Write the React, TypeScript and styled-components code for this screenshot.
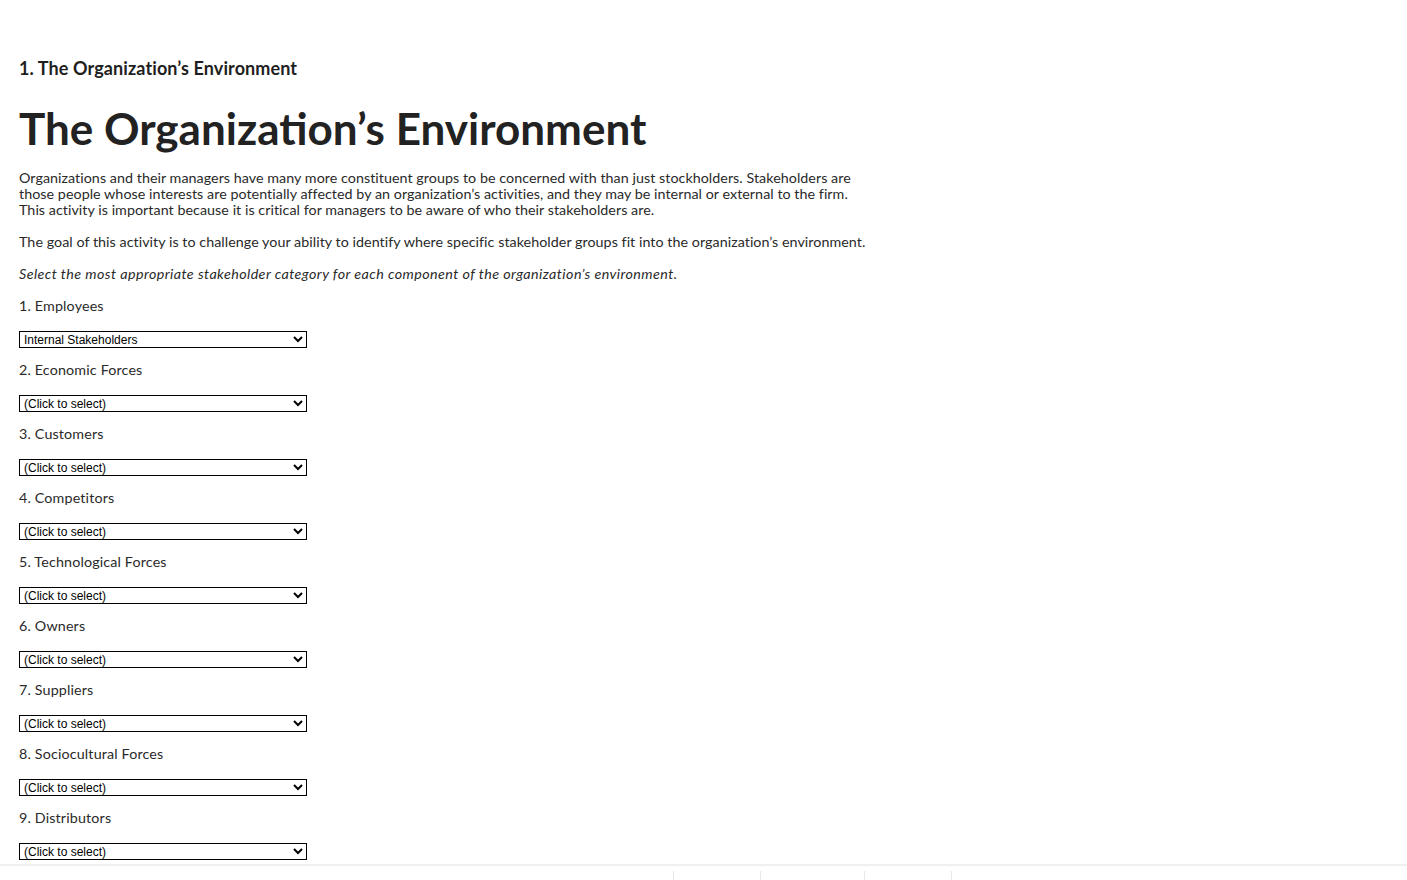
import React from "react";
import styled, { createGlobalStyle } from "styled-components";

const Global = createGlobalStyle`
  html, body { margin: 0; padding: 0; background: #fff; }
  body { font-family: Lato, "Open Sans", sans-serif; color: #222; }
`;

const Page = styled.main`
  padding: 55px 19px 40px 19px;
`;

const Crumb = styled.h2`
  margin: 0;
  font-size: 18px;
  letter-spacing: 0.1px;
  line-height: 26px;
  font-weight: 700;
  color: #1f1f1f;
`;

const Title = styled.h1`
  margin: 22px 0 17px 0;
  font-size: 44px;
  line-height: 50px;
  font-weight: 700;
  color: #222;
`;

const Para = styled.p<{ $italic?: boolean }>`
  margin: 0 0 16px 0;
  font-size: 14.3px;
  line-height: 16px;
  max-width: 856px;
  letter-spacing: ${(p) => (p.$italic ? "0.42px" : "0.04px")};
  font-style: ${(p) => (p.$italic ? "italic" : "normal")};
  color: #2a2a2a;
`;

const Item = styled.div`
  display: flex;
  flex-direction: column;
  align-items: flex-start;
`;

const Label = styled.label`
  font-size: 14.3px;
  letter-spacing: 0.15px;
  line-height: 16px;
  margin: 0 0 17px 0;
  color: #2a2a2a;
`;

const Select = styled.select`
  width: 288px;
  height: 17px;
  margin: 0 0 14px 0;
  border: 1px solid #000;
  border-radius: 0;
  padding: 0;
  font-family: Arial, "Liberation Sans", sans-serif;
  font-size: 12px;
  color: #000;
  background: #fff;
`;

const Footer = styled.footer`
  position: fixed;
  left: 0;
  right: 0;
  top: 864px;
  height: 50px;
  background: #fff;
  border-top: 2px solid #f0f0f0;
  display: flex;
  justify-content: flex-end;
  padding-right: 455px;
`;

const Tab = styled.div<{ $w: number }>`
  box-sizing: border-box;
  width: ${(p) => p.$w}px;
  margin-top: 5px;
  border-left: 1px solid #e8e8e8;
`;

const items = [
  "Employees",
  "Economic Forces",
  "Customers",
  "Competitors",
  "Technological Forces",
  "Owners",
  "Suppliers",
  "Sociocultural Forces",
  "Distributors",
];

export default function App() {
  return (
    <>
      <Global />
      <Page>
        <Crumb>1. The Organization’s Environment</Crumb>
        <Title>The Organization’s Environment</Title>
        <Para>
          Organizations and their managers have many more constituent groups to be concerned with than just
          stockholders. Stakeholders are those people whose interests are potentially affected by an
          organization’s activities, and they may be internal or external to the firm. This activity is important
          because it is critical for managers to be aware of who their stakeholders are.
        </Para>
        <Para>
          The goal of this activity is to challenge your ability to identify where specific stakeholder groups fit
          into the organization’s environment.
        </Para>
        <Para $italic>
          Select the most appropriate stakeholder category for each component of the organization’s environment.
        </Para>
        {items.map((name, i) => (
          <Item key={name}>
            <Label>
              {i + 1}. {name}
            </Label>
            <Select defaultValue={i === 0 ? "internal" : ""}>
              <option value="">(Click to select)</option>
              <option value="internal">Internal Stakeholders</option>
              <option value="task">External Stakeholders: Task Environment</option>
              <option value="general">External Stakeholders: General Environment</option>
            </Select>
          </Item>
        ))}
      </Page>
      <Footer>
        <Tab $w={87} />
        <Tab $w={104} />
        <Tab $w={87} />
        <Tab $w={1} />
      </Footer>
    </>
  );
}
